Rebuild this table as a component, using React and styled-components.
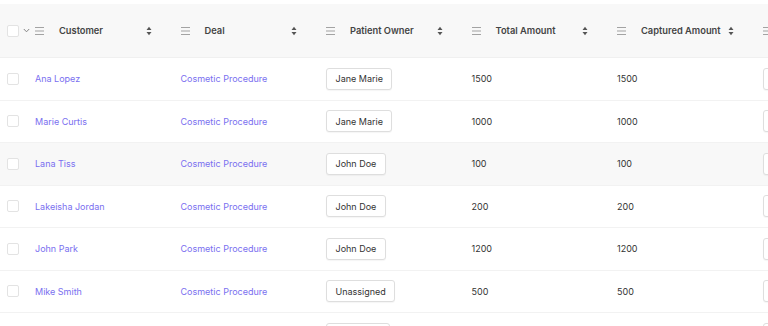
import styled, { createGlobalStyle } from 'styled-components'

const GlobalStyle = createGlobalStyle`
  html, body {
    margin: 0;
    padding: 0;
    background: #ffffff;
    overflow: hidden;
  }
  body {
    font-family: Inter, "Noto Sans", "Liberation Sans", sans-serif;
    -webkit-font-smoothing: antialiased;
  }
`

const COLS = '25px repeat(5, 145.5px) 1fr'

const Page = styled.div`
  width: 768px;
  height: 326px;
  overflow: hidden;
  padding-top: 4px;
  box-sizing: border-box;
  background: #fff;
`

const Grid = styled.div`
  display: grid;
  grid-template-columns: ${COLS};
  width: 800px;
`

const HeaderRow = styled(Grid)`
  height: 53px;
  background: #f8f8f8;
  border-bottom: 1px solid #f0f0f0;
`

const Row = styled(Grid)`
  height: 42.5px;
  background: ${(p) => (p.$highlight ? '#f8f8f8' : '#ffffff')};
  border-bottom: 1px solid #f2f2f2;
  box-sizing: border-box;
`

const HeadCell = styled.div`
  display: flex;
  align-items: center;
  padding: 0 19px 0 10px;
  font-size: 9.3px;
  font-weight: 600;
  color: #444;
`

const CheckCell = styled.div`
  display: flex;
  align-items: center;
  padding-left: 7px;
  gap: 4px;
`

const HeadLabel = styled.span`
  flex: 1;
  margin-left: 15px;
  white-space: nowrap;
`

const Cell = styled.div`
  display: flex;
  align-items: center;
  padding-left: 10px;
  font-size: 9px;
  color: #333;
  white-space: nowrap;
`

const Box = styled.span`
  display: inline-block;
  width: 10px;
  height: 10px;
  border: 1px solid #e3e3e3;
  border-radius: 2px;
  background: #fff;
  flex-shrink: 0;
`

const Link = styled.a`
  color: #7a6ff0;
  text-decoration: none;
  cursor: pointer;
`

const OwnerButton = styled.button`
  font-family: inherit;
  font-size: 9px;
  color: #333;
  background: #fff;
  border: 1px solid #dedede;
  border-radius: 3px;
  height: 22px;
  min-width: ${(p) => p.$minWidth || 20}px;
  padding: 0 8.5px;
  box-shadow: 0 1px 1px rgba(0, 0, 0, 0.04);
`

const MenuIcon = () => (
  <svg width="9" height="8" viewBox="0 0 9 8" style={{ flexShrink: 0 }}>
    <path d="M0 0.5h9M0 4h9M0 7.5h9" stroke="#999" strokeWidth="0.9" />
  </svg>
)

const SortIcon = () => (
  <svg width="6" height="10" viewBox="0 0 6 10" style={{ flexShrink: 0 }}>
    <path d="M3 0.8L5.5 4H0.5Z M3 9.2L5.5 6H0.5Z" fill="#555" />
  </svg>
)

const Chevron = () => (
  <svg width="7" height="5" viewBox="0 0 7 5" style={{ flexShrink: 0 }}>
    <path d="M0.8 1L3.5 3.8L6.2 1" stroke="#777" strokeWidth="0.9" fill="none" />
  </svg>
)

const columns = ['Customer', 'Deal', 'Patient Owner', 'Total Amount', 'Captured Amount']

const rows = [
  { name: 'Ana Lopez', owner: 'Jane Marie', total: 1500, captured: 1500 },
  { name: 'Marie Curtis', owner: 'Jane Marie', total: 1000, captured: 1000 },
  { name: 'Lana Tiss', owner: 'John Doe', total: 100, captured: 100, hover: true },
  { name: 'Lakeisha Jordan', owner: 'John Doe', total: 200, captured: 200 },
  { name: 'John Park', owner: 'John Doe', total: 1200, captured: 1200 },
  { name: 'Mike Smith', owner: 'Unassigned', total: 500, captured: 500 },
  { name: '', owner: '', total: '', captured: '' },
]

export default function App() {
  return (
    <Page>
      <GlobalStyle />
      <HeaderRow>
        <CheckCell>
          <Box />
          <Chevron />
        </CheckCell>
        {columns.map((c) => (
          <HeadCell key={c}>
            <MenuIcon />
            <HeadLabel>{c}</HeadLabel>
            <SortIcon />
          </HeadCell>
        ))}
        <HeadCell>
          <MenuIcon />
        </HeadCell>
      </HeaderRow>
      {rows.map((r, i) => (
        <Row key={i} $highlight={r.hover}>
          <CheckCell>{r.name && <Box />}</CheckCell>
          <Cell>
            <Link>{r.name}</Link>
          </Cell>
          <Cell>{r.name && <Link>Cosmetic Procedure</Link>}</Cell>
          <Cell>
            <OwnerButton $minWidth={r.owner ? 20 : 64} aria-label="owner">
              {r.owner}
            </OwnerButton>
          </Cell>
          <Cell>{r.total}</Cell>
          <Cell>{r.captured}</Cell>
          <Cell>
            <OwnerButton aria-label="action" />
          </Cell>
        </Row>
      ))}
    </Page>
  )
}
